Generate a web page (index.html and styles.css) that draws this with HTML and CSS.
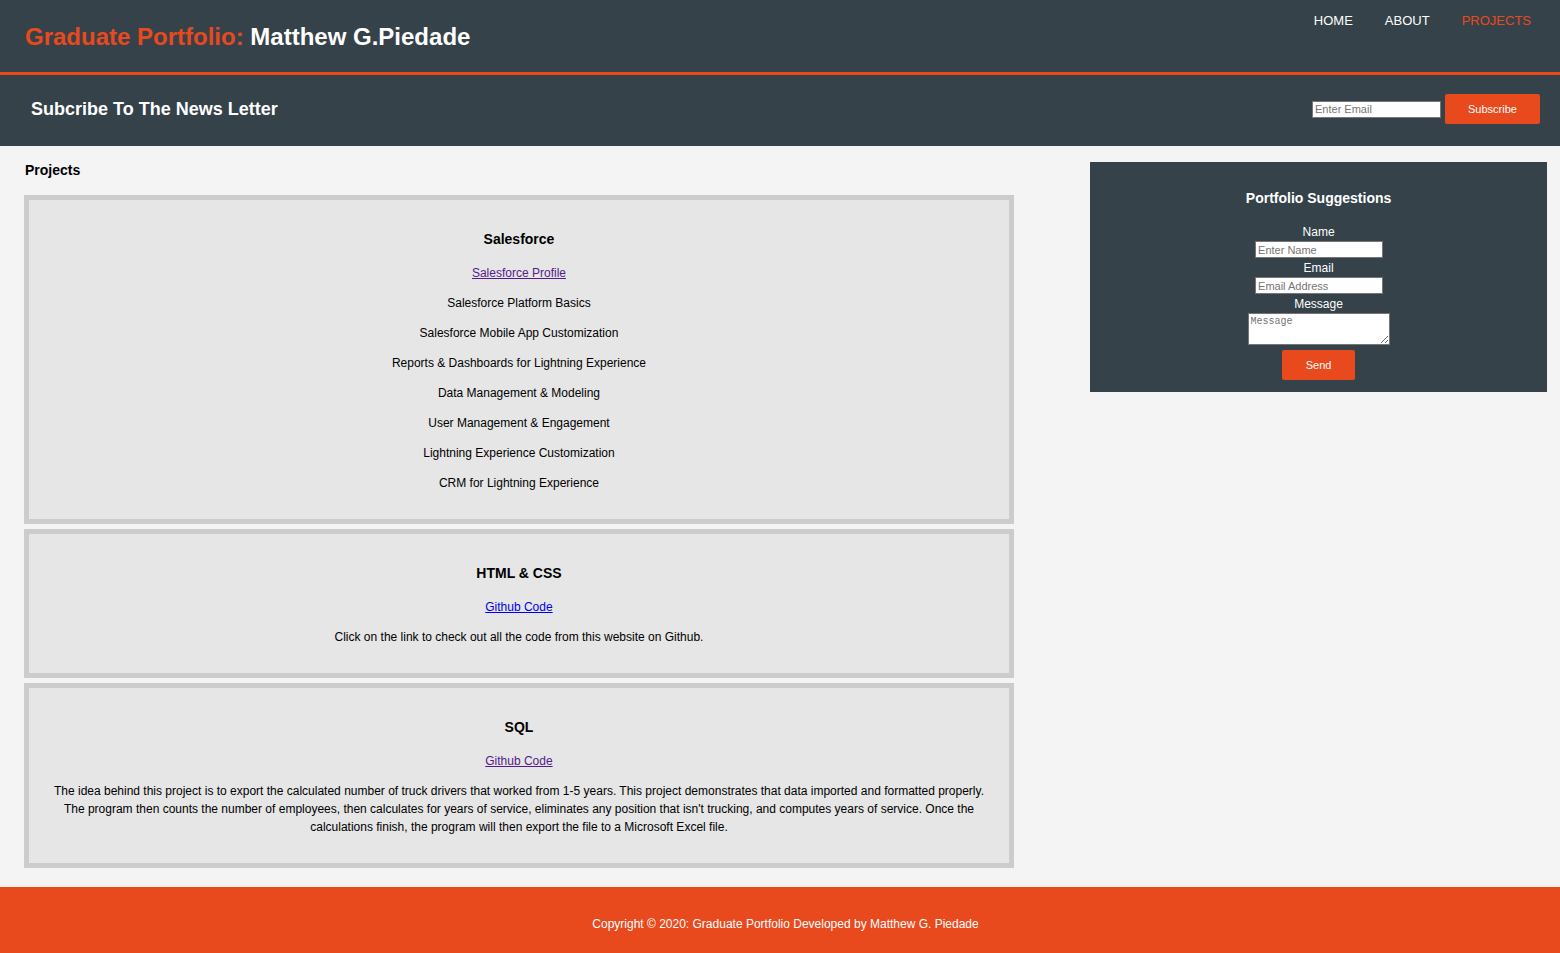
FILE: index.html
```html
<!DOCTYPE html>
<html lang="en">
<head>
<meta charset="utf-8">
<title>Graduate Portfolio | Projects</title>
<link rel="stylesheet" href="styles.css">
</head>
<body>
<header class="site-header">
  <div class="container header-inner">
    <h1 class="branding"><span class="highlight">Graduate Portfolio:</span> Matthew G.Piedade</h1>
    <nav class="main-nav">
      <ul>
        <li><a href="#">HOME</a></li>
        <li><a href="#">ABOUT</a></li>
        <li class="current"><a href="#">PROJECTS</a></li>
      </ul>
    </nav>
  </div>
</header>

<section class="newsletter">
  <div class="container newsletter-inner">
    <h1>Subcribe To The News Letter</h1>
    <form class="newsletter-form">
      <input type="email" class="nl-input" placeholder="Enter Email">
      <button type="button" class="button">Subscribe</button>
    </form>
  </div>
</section>

<section class="container main-area">
  <article class="projects">
    <h3 class="page-title">Projects</h3>

    <div class="project-box">
      <h3>Salesforce</h3>
      <p><a href="#" class="visited">Salesforce Profile</a></p>
      <p>Salesforce Platform Basics</p>
      <p>Salesforce Mobile App Customization</p>
      <p>Reports &amp; Dashboards for Lightning Experience</p>
      <p>Data Management &amp; Modeling</p>
      <p>User Management &amp; Engagement</p>
      <p>Lightning Experience Customization</p>
      <p>CRM for Lightning Experience</p>
    </div>

    <div class="project-box">
      <h3>HTML &amp; CSS</h3>
      <p><a href="#" class="unvisited">Github Code</a></p>
      <p>Click on the link to check out all the code from this website on Github.</p>
    </div>

    <div class="project-box">
      <h3>SQL</h3>
      <p><a href="#" class="visited">Github Code</a></p>
      <p>The idea behind this project is to export the calculated number of truck drivers that worked from 1-5 years. This project demonstrates that data imported and formatted properly. The program then counts the number of employees, then calculates for years of service, eliminates any position that isn't trucking, and computes years of service. Once the calculations finish, the program will then export the file to a Microsoft Excel file.</p>
    </div>
  </article>

  <aside class="sidebar">
    <h3>Portfolio Suggestions</h3>
    <form class="suggest-form">
      <label class="field-label">Name</label>
      <input type="text" class="field-input" placeholder="Enter Name">
      <label class="field-label">Email</label>
      <input type="email" class="field-input" placeholder="Email Address">
      <label class="field-label">Message</label>
      <textarea class="field-text" placeholder="Message"></textarea>
      <button type="button" class="button send">Send</button>
    </form>
  </aside>
</section>

<footer class="site-footer">
  <div class="container">
    <p>Copyright &copy; 2020: Graduate Portfolio Developed by Matthew G. Piedade</p>
  </div>
</footer>
</body>
</html>
```

FILE: styles.css
```css
* {
  box-sizing: border-box;
}

body {
  margin: 0;
  padding: 0;
  background: #f4f4f4;
  font-family: "Liberation Sans", Arial, Helvetica, sans-serif;
  font-size: 12px;
  line-height: 1.5;
  color: #000;
}

.container {
  margin: 0 13px 0 24px;
}

/* Header */
.site-header {
  background: #35424a;
  color: #fff;
  height: 75px;
  border-bottom: 3px solid #e8491d;
}

.header-inner {
  display: flex;
  justify-content: space-between;
  align-items: flex-start;
}

.branding {
  margin: 19px 0 0 1px;
  font-size: 24px;
  line-height: 36px;
  font-weight: bold;
}

.highlight {
  color: #e8491d;
}

.main-nav ul {
  list-style: none;
  margin: 11px 0 0;
  padding: 0;
  display: flex;
}

.main-nav li {
  padding: 0 16px;
}

.main-nav a {
  color: #fff;
  text-decoration: none;
  font-size: 13px;
  line-height: 20px;
}

.main-nav .current a {
  color: #e8491d;
}

/* Newsletter */
.newsletter {
  background: #35424a;
  color: #fff;
  padding: 19px 0 22px;
}

.newsletter-inner {
  display: flex;
  justify-content: space-between;
  align-items: center;
  padding: 0 7px;
}

.newsletter h1 {
  margin: 0;
  font-size: 18px;
  line-height: 27px;
  font-weight: bold;
}

.newsletter-form {
  display: flex;
  align-items: center;
  gap: 4px;
}

.nl-input {
  width: 129px;
  height: 17px;
  padding: 0 2px;
  border: 1px solid #767676;
  font-family: inherit;
  font-size: 11px;
  background: #fff;
}

.nl-input::placeholder,
.field-input::placeholder,
.field-text::placeholder {
  color: #757575;
}

.button {
  background: #e8491d;
  color: #fff;
  border: 0;
  border-radius: 2px;
  font-family: inherit;
  font-size: 11px;
  width: 95px;
  height: 30px;
  padding: 0;
}

/* Main area */
.main-area {
  display: flex;
  justify-content: space-between;
  align-items: flex-start;
}

.projects {
  width: 65%;
}

.page-title {
  margin: 14px 0 14px 1px;
  font-size: 14px;
  line-height: 21px;
}

.project-box {
  background: #e6e6e6;
  border: 5px solid #ccc;
  padding: 15px;
  margin-bottom: 5px;
  text-align: center;
}

.project-box h3 {
  margin: 14px 0;
  font-size: 14px;
  line-height: 21px;
}

.project-box p {
  margin: 12px 0;
}

.visited {
  color: #551a8b;
}

.unvisited {
  color: #0000ee;
}

/* Sidebar */
.sidebar {
  width: 30%;
  margin-top: 16px;
  background: #35424a;
  color: #fff;
  padding: 12px;
  text-align: center;
}

.sidebar h3 {
  margin: 14px 0;
  font-size: 14px;
  line-height: 21px;
}

.suggest-form {
  display: flex;
  flex-direction: column;
  align-items: center;
}

.field-label {
  display: block;
  line-height: 18px;
  font-size: 12px;
}

.field-input {
  width: 128px;
  height: 17px;
  margin: 0 0 1px 1px;
  padding: 0 2px;
  border: 1px solid #767676;
  font-family: inherit;
  font-size: 11px;
  background: #fff;
}

.field-text {
  width: 142px;
  height: 32px;
  margin: 0;
  padding: 2px;
  border: 1px solid #767676;
  font-family: "Liberation Mono", "DejaVu Sans Mono", monospace;
  font-size: 10px;
  background: #fff;
}

.send {
  width: 73px;
  margin-top: 5px;
}

/* Footer */
.site-footer {
  background: #e8491d;
  color: #fff;
  margin-top: 14px;
  padding: 28px 0 20px;
  text-align: center;
}

.site-footer p {
  margin: 0;
  line-height: 18px;
}
```
